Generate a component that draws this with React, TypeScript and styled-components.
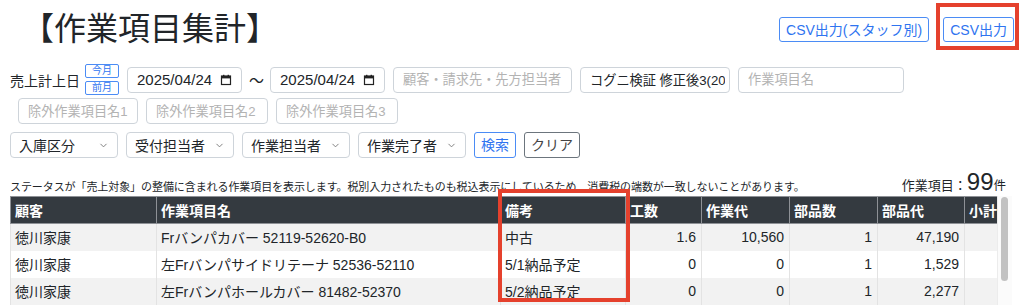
import React from 'react';
import styled, { createGlobalStyle } from 'styled-components';
import { ChevronDown } from 'lucide-react';

const GlobalStyle = createGlobalStyle`
  * { box-sizing: border-box; }
  body {
    margin: 0;
    background: #fff;
    color: #212529;
    font-family: "Liberation Sans", "Noto Sans CJK JP", sans-serif;
  }
`;

const Page = styled.div`
  width: 1024px;
  height: 305px;
  overflow: hidden;
  padding: 0 12px 0 10px;
`;

const TopBar = styled.div`
  display: flex;
  align-items: center;
  justify-content: space-between;
  height: 58px;
`;

const Title = styled.h1`
  margin: 0;
  padding-left: 12px;
  font-size: 32px;
  font-weight: 400;
  line-height: 1;
  color: #212529;
`;

const TopActions = styled.div`
  display: flex;
  align-items: center;
  gap: 14px;
  margin-top: 1px;
  margin-right: -2px;
`;

const OutlineButton = styled.button<{ $tone?: 'primary' | 'secondary' }>`
  height: 25px;
  padding: 0 6px;
  background: #fff;
  border: 1px solid ${p => (p.$tone === 'secondary' ? '#6c757d' : '#4b8cf5')};
  border-radius: 3px;
  color: ${p => (p.$tone === 'secondary' ? '#444' : '#2f74f0')};
  font-family: inherit;
  font-size: 14px;
  line-height: 1;
  white-space: nowrap;
`;

const Annotated = styled.span`
  position: relative;
  display: inline-flex;

  &::after {
    content: '';
    position: absolute;
    top: -14px;
    left: -7px;
    right: -5px;
    bottom: -8px;
    border: 4px solid #e5412d;
    pointer-events: none;
  }
`;

const FilterRow = styled.div<{ $indent?: number; $top: number }>`
  display: flex;
  align-items: center;
  gap: 8px;
  margin-top: ${p => p.$top}px;
  padding-left: ${p => p.$indent ?? 0}px;
`;

const Label = styled.span`
  font-size: 14px;
  white-space: nowrap;
  margin-right: -3px;
`;

const MonthStack = styled.div`
  display: flex;
  flex-direction: column;
  gap: 3px;
`;

const MonthButton = styled.button`
  width: 34px;
  height: 14px;
  padding: 0;
  background: #fff;
  border: 1px solid #4b8cf5;
  border-radius: 2px;
  color: #2f74f0;
  font-family: inherit;
  font-size: 10px;
  line-height: 12px;
`;

const DateBox = styled.div`
  width: 115px;
  height: 26px;
  display: flex;
  align-items: center;
  justify-content: space-between;
  padding: 0 9px 0 9px;
  border: 1px solid #ced4da;
  border-radius: 4px;
  font-size: 15px;
  color: #212529;
`;

const Tilde = styled.span`
  font-size: 15px;
  margin: 0 -2px 0 -1px;
`;

const TextInput = styled.input<{ $w: number }>`
  width: ${p => p.$w}px;
  height: 26px;
  padding: 0 4px 0 9px;
  border: 1px solid #ced4da;
  border-radius: 4px;
  font-family: inherit;
  font-size: 13.2px;
  color: #212529;
  outline: none;

  &::placeholder {
    color: #b3b3b3;
  }
`;

const SelectBox = styled.div`
  width: 108px;
  height: 26px;
  display: flex;
  align-items: center;
  justify-content: space-between;
  padding: 0 8px 0 8px;
  border: 1px solid #ced4da;
  border-radius: 4px;
  font-size: 14px;
  color: #212529;
`;

const ActionButton = styled(OutlineButton)`
  height: 26px;
  padding: 0 6px;
`;

const StatusRow = styled.div`
  display: flex;
  align-items: flex-end;
  justify-content: space-between;
  height: 28px;
  margin-top: 9px;
  margin-bottom: 1px;
`;

const Notice = styled.span`
  font-size: 11px;
  line-height: 16px;
  letter-spacing: -0.08px;
  color: #212529;
`;

const Count = styled.div`
  margin-right: 6px;
  margin-bottom: 1px;
  font-size: 13px;
  line-height: 1;
  white-space: nowrap;

  b {
    font-weight: 400;
    font-size: 24px;
  }

  small {
    font-size: 12.5px;
  }
`;

const TableArea = styled.div`
  position: relative;
`;

const TableFrame = styled.div`
  display: flex;
  height: 110px;
`;

const TableClip = styled.div`
  width: 987px;
  overflow: hidden;
`;

const ScrollTrack = styled.div`
  flex: 1;
  padding: 1px 4px 0 3px;
  background: #fbfbfb;
  border-left: 1px solid #ececec;
`;

const ScrollThumb = styled.div`
  height: 84px;
  border-radius: 4px;
  background: #c2c2c2;
`;

const Table = styled.table`
  width: 987px;
  border-collapse: collapse;
  table-layout: fixed;
  font-size: 14px;
`;

const Th = styled.th`
  height: 27px;
  padding: 0 4px;
  background: #343a40;
  border: 1px solid #8e9196;
  color: #fff;
  font-weight: 700;
  text-align: left;
  white-space: nowrap;
  overflow: hidden;
`;

const Tr = styled.tr<{ $striped: boolean }>`
  background: ${p => (p.$striped ? '#f2f2f2' : '#fff')};
`;

const Td = styled.td<{ $num?: boolean }>`
  height: 27px;
  padding: 0 5px 0 4px;
  border: 1px solid #e3e3e3;
  border-top: none;
  border-bottom: none;
  text-align: ${p => (p.$num ? 'right' : 'left')};
  white-space: nowrap;
  overflow: hidden;
`;

const ColumnMark = styled.div`
  position: absolute;
  left: 488px;
  top: -7px;
  width: 132px;
  height: 113px;
  border: 4px solid #e5412d;
  pointer-events: none;
`;

const CalendarIcon = () => (
  <svg width="12" height="12" viewBox="0 0 12 12" fill="none">
    <rect x="1.5" y="2" width="9" height="8.5" stroke="#222" strokeWidth="1.2" />
    <rect x="1.5" y="2" width="9" height="2.4" fill="#222" />
    <rect x="3" y="0.8" width="1.4" height="1.6" fill="#222" />
    <rect x="7.6" y="0.8" width="1.4" height="1.6" fill="#222" />
  </svg>
);

const columns = [
  { key: '顧客', w: 146 },
  { key: '作業項目名', w: 344 },
  { key: '備考', w: 125 },
  { key: '工数', w: 76 },
  { key: '作業代', w: 88 },
  { key: '部品数', w: 88 },
  { key: '部品代', w: 87 },
  { key: '小計', w: 33 },
];

const rows = [
  ['徳川家康', 'Frバンパカバー 52119-52620-B0', '中古', '1.6', '10,560', '1', '47,190', ''],
  ['徳川家康', '左Frバンパサイドリテーナ 52536-52110', '5/1納品予定', '0', '0', '1', '1,529', ''],
  ['徳川家康', '左Frバンパホールカバー 81482-52370', '5/2納品予定', '0', '0', '1', '2,277', ''],
];

const selects = ['入庫区分', '受付担当者', '作業担当者', '作業完了者'];

export default function App() {
  return (
    <Page>
      <GlobalStyle />
      <TopBar>
        <Title>【作業項目集計】</Title>
        <TopActions>
          <OutlineButton>CSV出力(スタッフ別)</OutlineButton>
          <Annotated>
            <OutlineButton>CSV出力</OutlineButton>
          </Annotated>
        </TopActions>
      </TopBar>

      <FilterRow $top={6}>
        <Label>売上計上日</Label>
        <MonthStack>
          <MonthButton>今月</MonthButton>
          <MonthButton>前月</MonthButton>
        </MonthStack>
        <DateBox>
          2025/04/24
          <CalendarIcon />
        </DateBox>
        <Tilde>〜</Tilde>
        <DateBox>
          2025/04/24
          <CalendarIcon />
        </DateBox>
        <TextInput $w={179} placeholder="顧客・請求先・先方担当者" />
        <TextInput $w={150} readOnly value="コグニ検証 修正後3(20250424)" />
        <TextInput $w={166} placeholder="作業項目名" />
      </FilterRow>

      <FilterRow $top={3} $indent={8}>
        <TextInput $w={120} placeholder="除外作業項目名1" />
        <TextInput $w={122} placeholder="除外作業項目名2" />
        <TextInput $w={122} placeholder="除外作業項目名3" />
      </FilterRow>

      <FilterRow $top={8}>
        {selects.map(s => (
          <SelectBox key={s}>
            {s}
            <ChevronDown size={11} color="#777" strokeWidth={2} />
          </SelectBox>
        ))}
        <ActionButton>検索</ActionButton>
        <ActionButton $tone="secondary">クリア</ActionButton>
      </FilterRow>

      <StatusRow>
        <Notice>
          ステータスが「売上対象」の整備に含まれる作業項目を表示します。税別入力されたものも税込表示にしているため、消費税の端数が一致しないことがあります。
        </Notice>
        <Count>
          作業項目：<b>99</b>
          <small>件</small>
        </Count>
      </StatusRow>

      <TableArea>
        <TableFrame>
          <TableClip>
            <Table>
              <colgroup>
                {columns.map(c => (
                  <col key={c.key} style={{ width: c.w }} />
                ))}
              </colgroup>
              <thead>
                <tr>
                  {columns.map(c => (
                    <Th key={c.key}>{c.key}</Th>
                  ))}
                </tr>
              </thead>
              <tbody>
                {rows.map((r, i) => (
                  <Tr key={i} $striped={i % 2 === 0}>
                    {r.map((cell, j) => (
                      <Td key={j} $num={j >= 3}>
                        {cell}
                      </Td>
                    ))}
                  </Tr>
                ))}
              </tbody>
            </Table>
          </TableClip>
          <ScrollTrack>
            <ScrollThumb />
          </ScrollTrack>
        </TableFrame>
        <ColumnMark />
      </TableArea>
    </Page>
  );
}
